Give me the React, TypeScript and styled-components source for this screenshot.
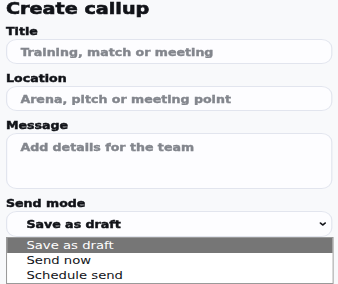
import React, { useState } from "react";
import styled, { createGlobalStyle } from "styled-components";

/* The reference is drawn with a horizontal stretch; the form is laid
   out at its natural width and widened by this factor. */
const STRETCH = 1.2;

const Global = createGlobalStyle`
  html, body { margin: 0; padding: 0; background: #f8f9fb; overflow: hidden; }
  body { font-family: "DejaVu Sans", "Liberation Sans", sans-serif; color: #111318; }
  * { box-sizing: border-box; }
`;

const Page = styled.div`
  display: flex;
  flex-direction: column;
  width: ${338 / STRETCH}px;
  padding: 0 ${6 / STRETCH}px;
  transform: scaleX(${STRETCH});
  transform-origin: 0 0;
`;

const heavy = `
  font-weight: 700;
  -webkit-text-stroke: 0.45px currentColor;
`;

const Heading = styled.h1`
  margin: 0 0 7px;
  font-size: 16px;
  line-height: 18px;
  ${heavy}
  -webkit-text-stroke-width: 0.6px;
  color: #111318;
`;

const Field = styled.div`
  display: flex;
  flex-direction: column;
  margin-bottom: 8px;
`;

const Label = styled.label`
  font-size: 10.5px;
  line-height: 12px;
  ${heavy}
  margin-bottom: 2px;
  color: #111318;
`;

const fieldBase = `
  width: 100%;
  border: 1px solid #e2e5ee;
  border-radius: 9px;
  background: #fdfdff;
  font-family: "DejaVu Sans", "Liberation Sans", sans-serif;
  font-size: 10.5px;
  ${heavy}
  color: #111318;
  outline: none;
`;

const placeholder = `
  &::placeholder {
    color: #83868d;
    opacity: 1;
    font-weight: 700;
    -webkit-text-stroke: 0.4px #83868d;
  }
`;

const TextInput = styled.input`
  ${fieldBase}
  height: 25px;
  padding: 0 11px;
  ${placeholder}
`;

const TextArea = styled.textarea`
  ${fieldBase}
  display: block;
  height: 56px;
  padding: 7px 11px;
  line-height: 13px;
  resize: none;
  ${placeholder}
`;

const SelectWrap = styled.div`
  display: flex;
  flex-direction: column;
`;

const SelectButton = styled.button`
  ${fieldBase}
  height: 26px;
  padding: 0 4px 0 16px;
  display: flex;
  align-items: center;
  justify-content: space-between;
  text-align: left;
  cursor: pointer;
`;

const List = styled.ul`
  list-style: none;
  margin: 0;
  padding: 0;
  width: calc(100% + 1px);
  background: #ffffff;
  border: 1px solid #9a9a9a;
`;

const Option = styled.li<{ $active?: boolean }>`
  height: 15px;
  line-height: 15px;
  padding-left: 16px;
  font-size: 11px;
  color: ${(p) => (p.$active ? "#ffffff" : "#111318")};
  background: ${(p) => (p.$active ? "#767676" : "#ffffff")};
  cursor: default;
`;

const Chevron = () => (
  <svg width="6" height="4" viewBox="0 0 6 4" aria-hidden="true">
    <path d="M1 1l2 2 2-2" fill="none" stroke="#111318" strokeWidth="1.5" strokeLinecap="round" strokeLinejoin="round" />
  </svg>
);

const modes = ["Save as draft", "Send now", "Schedule send"];

export default function App() {
  const [mode, setMode] = useState(modes[0]);
  const [open, setOpen] = useState(true);
  return (
    <Page>
      <Global />
      <Heading>Create callup</Heading>
      <Field>
        <Label>Title</Label>
        <TextInput placeholder="Training, match or meeting" />
      </Field>
      <Field>
        <Label>Location</Label>
        <TextInput placeholder="Arena, pitch or meeting point" />
      </Field>
      <Field>
        <Label>Message</Label>
        <TextArea placeholder="Add details for the team" />
      </Field>
      <SelectWrap>
        <Label>Send mode</Label>
        <SelectButton type="button" onClick={() => setOpen(!open)}>
          <span>{mode}</span>
          <Chevron />
        </SelectButton>
        {open && (
          <List role="listbox">
            {modes.map((m) => (
              <Option key={m} role="option" $active={m === mode} onClick={() => setMode(m)}>
                {m}
              </Option>
            ))}
          </List>
        )}
      </SelectWrap>
    </Page>
  );
}
